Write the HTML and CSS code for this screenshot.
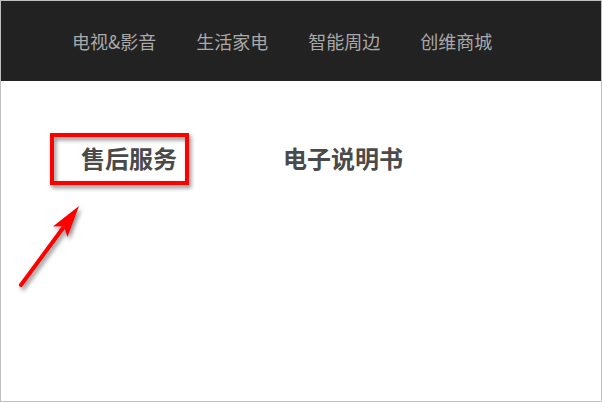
FILE: index.html
```html
<!DOCTYPE html>
<html lang="zh-CN">
<head>
<meta charset="utf-8">
<title>创维</title>
<link rel="stylesheet" href="styles.css">
</head>
<body>
<div class="page">
  <header class="topbar">
    <nav class="nav">
      <a class="nav-item">电视&amp;影音</a>
      <a class="nav-item">生活家电</a>
      <a class="nav-item">智能周边</a>
      <a class="nav-item">创维商城</a>
    </nav>
  </header>
  <main class="content">
    <div class="tabs">
      <a class="tab">售后服务</a>
      <a class="tab">电子说明书</a>
    </div>
  </main>
</div>
<svg class="annotation" width="602" height="402" viewBox="0 0 602 402" xmlns="http://www.w3.org/2000/svg">
  <rect x="52" y="135" width="135" height="48" fill="none" stroke="#ff0000" stroke-width="4"/>
  <line x1="21" y1="285" x2="63" y2="228" stroke="#ff0000" stroke-width="4" stroke-linecap="round"/>
  <polygon points="79,206 67.4,237.1 64.2,226.2 52.9,226.5" fill="#ff0000"/>
</svg>
</body>
</html>
```
FILE: styles.css
```css
html, body {
  margin: 0;
  padding: 0;
  background: #ffffff;
}
body {
  position: relative;
  width: 602px;
  height: 402px;
  overflow: hidden;
  font-family: "Noto Sans CJK SC", "Noto Sans", sans-serif;
}
.page {
  box-sizing: border-box;
  width: 602px;
  height: 402px;
  border: 1px solid #c0c0c0;
  background: #ffffff;
}
.topbar {
  height: 80px;
  background: #222222;
  display: flex;
  align-items: center;
}
.nav {
  display: flex;
  gap: 40px;
  padding-left: 71px;
}
.nav-item {
  font-size: 18px;
  line-height: 24px;
  color: #a9a9a9;
  text-decoration: none;
}
.content {
  padding-top: 65px;
}
.tabs {
  display: flex;
  gap: 106px;
  padding-left: 80px;
}
.tab {
  font-size: 24px;
  line-height: 24px;
  font-weight: bold;
  color: #4a4a4a;
}
.annotation {
  position: absolute;
  left: 0;
  top: 0;
  pointer-events: none;
  filter: drop-shadow(2px 3px 2px rgba(0, 0, 0, 0.45));
}
```
